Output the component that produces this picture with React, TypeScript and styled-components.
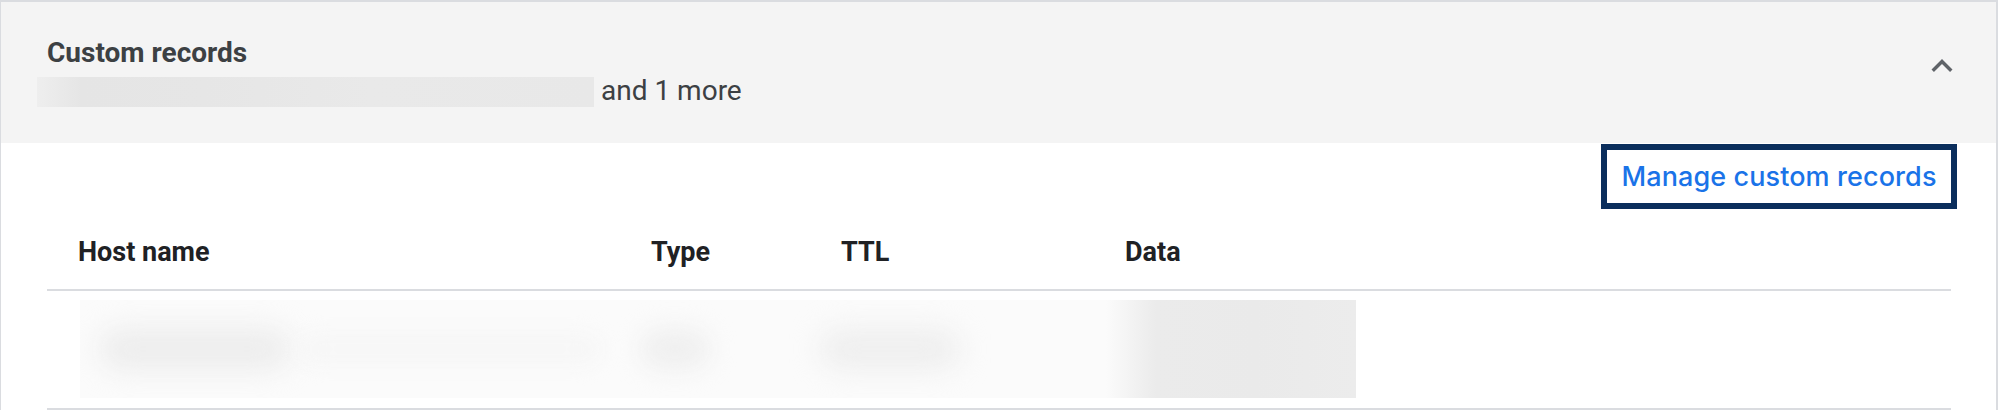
import React from "react";
import styled, { createGlobalStyle } from "styled-components";

const GlobalStyle = createGlobalStyle`
  html, body {
    margin: 0;
    padding: 0;
    background: #ffffff;
  }
  body {
    font-family: Roboto, "Liberation Sans", Arial, sans-serif;
    -webkit-font-smoothing: antialiased;
  }
`;

const Card = styled.section`
  width: 1998px;
  box-sizing: border-box;
  border-top: 2px solid #dadce0;
  border-left: 1px solid #dadce0;
  border-right: 2px solid #dadce0;
  background: #ffffff;
`;

const Header = styled.div`
  display: flex;
  align-items: flex-start;
  height: 141px;
  box-sizing: border-box;
  padding-left: 36px;
  background: #f4f4f4;
`;

const HeaderText = styled.div`
  display: flex;
  flex-direction: column;
  padding-top: 35px;
`;

const Title = styled.h2`
  margin: 0 0 0 10px;
  font-size: 28px;
  line-height: 32px;
  font-weight: 700;
  color: #3c4043;
`;

const Summary = styled.div`
  display: flex;
  align-items: flex-start;
  margin-top: 6px;
  height: 32px;
`;

const SummaryRedacted = styled.span<{ $width: number }>`
  display: block;
  width: ${(p) => p.$width}px;
  height: 30px;
  margin-top: 2px;
  background: linear-gradient(
    90deg,
    #eeeeee 0%,
    #e5e5e5 8%,
    #e6e6e6 30%,
    #e9e9e9 60%,
    #e8e8e8 100%
  );
`;

const SummaryText = styled.span`
  margin-left: 7px;
  font-size: 28px;
  line-height: 32px;
  font-weight: 400;
  color: #3c4043;
`;

const CollapseButton = styled.button`
  margin: 43px 33px 0 auto;
  width: 42px;
  height: 42px;
  padding: 0;
  border: none;
  background: transparent;
  display: flex;
  align-items: center;
  justify-content: center;
  cursor: pointer;
`;

const Body = styled.div`
  display: flex;
  flex-direction: column;
`;

const ActionRow = styled.div`
  display: flex;
  justify-content: flex-end;
  padding-right: 39px;
  margin-top: 1px;
`;

const ManageButton = styled.button`
  width: 356px;
  height: 65px;
  box-sizing: border-box;
  border: 6px solid #0b2e5c;
  background: #ffffff;
  color: #1a73e8;
  font-family: Inter, Roboto, "Liberation Sans", sans-serif;
  font-size: 27px;
  font-weight: 500;
  letter-spacing: 0.1px;
  display: flex;
  align-items: center;
  justify-content: center;
  padding: 0;
  cursor: pointer;
`;

const Table = styled.div`
  margin: 0 45px 0 46px;
  display: grid;
  grid-template-columns: 573px 190px 284px 1fr;
`;

const HeadCell = styled.div`
  height: 82px;
  box-sizing: border-box;
  padding: 27px 0 0 31px;
  border-bottom: 2px solid #dadce0;
  font-size: 27px;
  line-height: 32px;
  font-weight: 700;
  color: #202124;
`;

const RowCell = styled.div`
  grid-column: 1 / -1;
  height: 119px;
  box-sizing: border-box;
  padding: 9px 0 0 33px;
  border-bottom: 2px solid #dadce0;
`;

const RedactedStrip = styled.div<{ $width: number }>`
  width: ${(p) => p.$width}px;
  height: 98px;
  overflow: hidden;
  display: flex;
  align-items: center;
  background: #fbfbfb;
`;

const Smudge = styled.span<{ $left: number; $width: number; $tone: string; $blur: number; $height?: number }>`
  flex: none;
  margin-left: ${(p) => p.$left}px;
  width: ${(p) => p.$width}px;
  height: ${(p) => p.$height ?? 40}px;
  background: ${(p) => p.$tone};
  border-radius: 20px;
  filter: blur(${(p) => p.$blur}px);
`;

const DataBlock = styled.span`
  flex: none;
  margin-left: auto;
  width: 250px;
  height: 98px;
  background: linear-gradient(90deg, rgba(234, 234, 234, 0) 0%, #ebebeb 20%, #eaeaea 60%, #ececec 100%);
`;

const ChevronUp = () => (
  <svg width="42" height="42" viewBox="0 0 24 24" aria-hidden="true">
    <path d="M12 8l-6 6 1.41 1.41L12 10.83l4.59 4.58L18 14z" fill="#5f6368" />
  </svg>
);

const columns = ["Host name", "Type", "TTL", "Data"];

export default function App() {
  return (
    <>
      <GlobalStyle />
      <Card>
        <Header>
          <HeaderText>
            <Title>Custom records</Title>
            <Summary>
              <SummaryRedacted $width={557} />
              <SummaryText>and 1 more</SummaryText>
            </Summary>
          </HeaderText>
          <CollapseButton aria-label="Collapse">
            <ChevronUp />
          </CollapseButton>
        </Header>
        <Body>
          <ActionRow>
            <ManageButton>Manage custom records</ManageButton>
          </ActionRow>
          <Table>
            {columns.map((c) => (
              <HeadCell key={c}>{c}</HeadCell>
            ))}
            <RowCell>
              <RedactedStrip $width={1276}>
                <Smudge $left={20} $width={190} $tone="#ececec" $blur={14} />
                <Smudge $left={10} $width={300} $tone="#f6f6f6" $blur={10} $height={30} />
                <Smudge $left={40} $width={70} $tone="#efefef" $blur={12} />
                <Smudge $left={110} $width={140} $tone="#eeeeee" $blur={14} />
                <DataBlock />
              </RedactedStrip>
            </RowCell>
          </Table>
        </Body>
      </Card>
    </>
  );
}
